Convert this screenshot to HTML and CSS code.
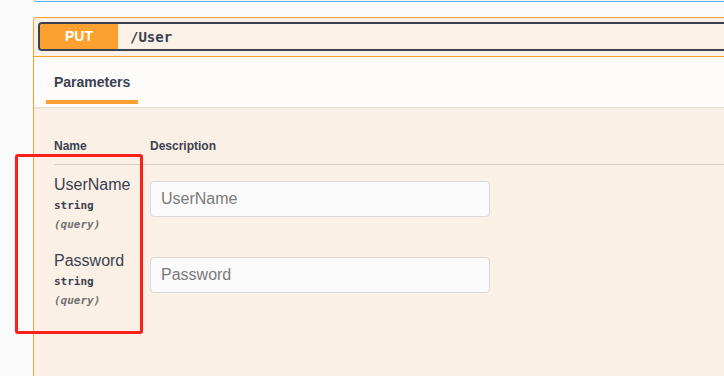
FILE: index.html
```html
<!DOCTYPE html>
<html lang="en">
<head>
    <meta charset="UTF-8">
    <title>PUT /User</title>
    <link rel="stylesheet" href="styles.css">
</head>
<body>
    <div class="wrapper">
        <div class="opblock-prev"></div>

        <div class="opblock opblock-put">
            <div class="opblock-summary">
                <div class="summary-box">
                    <span class="method">PUT</span>
                    <span class="path">/User</span>
                </div>
            </div>

            <div class="tab-header">
                <div class="tab-item">Parameters</div>
            </div>

            <div class="opblock-body">
                <div class="param-head">
                    <div class="col-name">Name</div>
                    <div class="col-desc">Description</div>
                </div>

                <div class="param-row">
                    <div class="col-name">
                        <div class="param-name">UserName</div>
                        <div class="param-type">string</div>
                        <div class="param-in">(query)</div>
                    </div>
                    <div class="col-desc">
                        <input type="text" class="param-input" placeholder="UserName">
                    </div>
                </div>

                <div class="param-row">
                    <div class="col-name">
                        <div class="param-name">Password</div>
                        <div class="param-type">string</div>
                        <div class="param-in">(query)</div>
                    </div>
                    <div class="col-desc">
                        <input type="text" class="param-input" placeholder="Password">
                    </div>
                </div>
            </div>
        </div>
    </div>

    <!-- annotation box drawn over the screenshot -->
    <div class="highlight"></div>
</body>
</html>
```

FILE: styles.css
```css
html, body {
    margin: 0;
    height: 100%;
}
body {
    background-color: #fafafa;
    font-family: "Liberation Sans", Arial, sans-serif;
    color: #3b4151;
    overflow: hidden;
    position: relative;
}
.wrapper {
    padding-left: 33px;
    height: 100%;
    display: flex;
    flex-direction: column;
}
.opblock-prev {
    height: 1px;
    margin-left: 1px;
    margin-right: -10px;
    background-color: #f5f6f8;
    border: 1px solid #61affe;
    border-top: none;
    border-radius: 0 0 0 4px;
    margin-bottom: 15px;
    flex-shrink: 0;
}
.opblock {
    flex: 1;
    margin-right: -10px;
    border: 1px solid #fca130;
    border-bottom: none;
    border-radius: 4px 4px 0 0;
    background-color: rgba(252, 161, 48, 0.1);
}
.opblock-summary {
    padding: 4px 4px 5px;
    border-bottom: 1px solid #fca130;
}
.summary-box {
    display: flex;
    align-items: center;
    height: 25px;
    border: 2px solid #3b4151;
    border-right: none;
    border-radius: 4px 0 0 4px;
    background-color: #fbf1e6;
}
.method {
    width: 78px;
    height: 25px;
    line-height: 25px;
    text-align: center;
    background-color: #fca130;
    color: #fff;
    font-weight: bold;
    font-size: 14px;
    border-radius: 2px 0 0 2px;
}
.path {
    margin-left: 12px;
    font-family: "DejaVu Sans Mono", monospace;
    font-weight: bold;
    font-size: 14px;
}
.tab-header {
    height: 50px;
    padding-left: 12px;
    background-color: rgba(255, 255, 255, 0.8);
    box-shadow: 0 1px 2px rgba(0, 0, 0, 0.1);
}
.tab-item {
    display: inline-block;
    padding: 16px 8px 0;
    line-height: 18px;
    font-size: 14px;
    font-weight: bold;
}
.tab-item::after {
    content: "";
    display: block;
    height: 4px;
    margin: 9px -8px 0;
    background-color: #fca130;
}
.opblock-body {
    padding-left: 20px;
}
.param-head {
    display: flex;
    padding-top: 32px;
    padding-bottom: 10px;
    line-height: 15px;
    font-size: 12px;
    font-weight: bold;
    border-bottom: 1px solid rgba(59, 65, 81, 0.2);
}
.col-name {
    width: 96px;
    flex-shrink: 0;
}
.param-row {
    display: flex;
    padding: 10px 0 9px;
}
.param-name {
    font-size: 16px;
    line-height: 20px;
}
.param-type {
    padding-top: 3px;
    line-height: 15px;
    font-family: "DejaVu Sans Mono", monospace;
    font-size: 11px;
    font-weight: bold;
}
.param-in {
    padding-top: 4px;
    line-height: 15px;
    font-family: "DejaVu Sans Mono", monospace;
    font-size: 11px;
    font-style: italic;
    font-weight: 600;
    color: #727272;
}
.param-input {
    box-sizing: border-box;
    width: 340px;
    height: 36px;
    margin-top: 6px;
    padding: 0 10px;
    border: 1px solid #d9d9d9;
    border-radius: 4px;
    background-color: #fafafa;
    font-family: "Liberation Sans", Arial, sans-serif;
    font-size: 16px;
    color: #3b4151;
}
.param-input::placeholder {
    color: #7a7a7a;
}
.highlight {
    position: absolute;
    left: 15px;
    top: 154px;
    width: 122px;
    height: 174px;
    border: 3px solid #ff2015;
    border-radius: 3px;
}
```
